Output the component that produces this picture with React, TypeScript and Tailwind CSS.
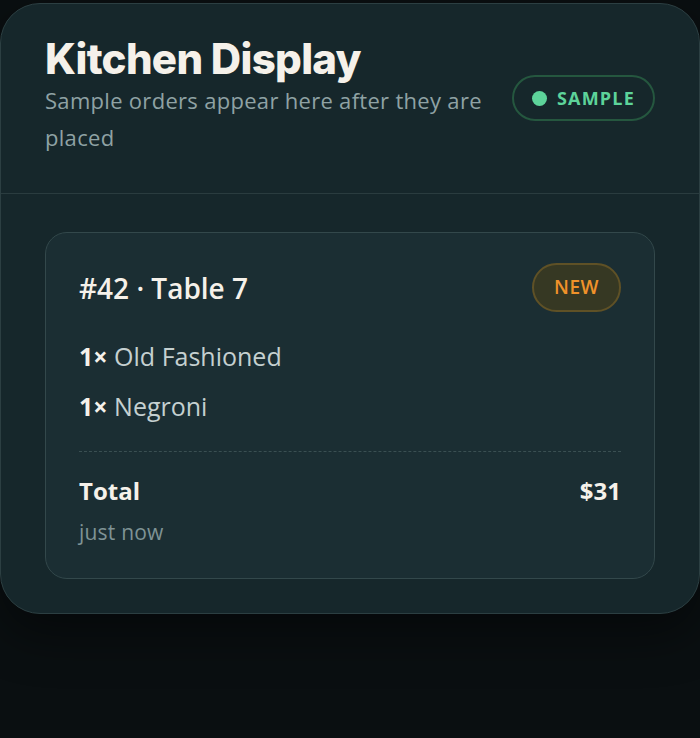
export default function App() {
  return (
    <div
      className="min-h-[738px] w-full bg-[#0a0f11] pt-[3px]"
      style={{ fontFamily: "'Open Sans', 'Noto Sans', sans-serif" }}
    >
      <div className="w-[700px] overflow-hidden rounded-[40px] border border-[#2c3f42] bg-[#16272b] shadow-[0_20px_50px_rgba(0,0,0,0.45)]">
        <header className="flex items-start justify-between border-b border-[#2a3c3f] px-[44px] pb-[37px] pt-[32px]">
          <div>
            <h1
              className="text-[42px] font-extrabold leading-[46px] tracking-[-0.7px] text-[#f5f1ea]"
              style={{ fontFamily: "Inter, 'Noto Sans', sans-serif" }}
            >
              Kitchen Display
            </h1>
            <p className="w-[450px] text-[22px] leading-[37px] tracking-[0.3px] text-[#8fa2a4]">
              Sample orders appear here after they are placed
            </p>
          </div>
          <div className="mt-[39px] flex h-[46px] items-center gap-[10px] rounded-full border-2 border-[#25573f] px-[18px]">
            <span className="h-[15px] w-[15px] rounded-full bg-[#5dd39a]" />
            <span className="text-[18px] font-bold tracking-[1.2px] text-[#5dd39a]">SAMPLE</span>
          </div>
        </header>

        <div className="px-[44px] pb-[34px] pt-[38px]">
          <div className="rounded-[22px] border border-[#33484b] bg-[#1b2e33] px-[33px] pb-[32px] pt-[30px]">
            <div className="flex items-center justify-between">
              <h2 className="text-[28px] font-semibold text-[#f5f1ea]">#42 · Table 7</h2>
              <span className="flex h-[49px] w-[89px] items-center justify-center rounded-full border-2 border-[#5f5126] bg-[#363823] text-[19px] font-semibold tracking-[0.5px] text-[#f0922a]">
                NEW
              </span>
            </div>

            <ul className="mt-[27px] flex flex-col gap-[16px] text-[25px] leading-[34px]">
              <li>
                <span className="font-bold text-[#f5f1ea]">1×</span>{" "}
                <span className="text-[#c5d0d0]">Old Fashioned</span>
              </li>
              <li>
                <span className="font-bold text-[#f5f1ea]">1×</span>{" "}
                <span className="text-[#c5d0d0]">Negroni</span>
              </li>
            </ul>

            <div className="mt-[28px] border-t border-dashed border-[#3a4f52]" />

            <div className="mt-[22px] flex items-center justify-between text-[24px] font-bold leading-[34px] text-[#f5f1ea]">
              <span>Total</span>
              <span>$31</span>
            </div>
            <p className="mt-[10px] text-[21px] leading-[28px] tracking-[0.2px] text-[#7f9395]">just now</p>
          </div>
        </div>
      </div>
    </div>
  )
}
